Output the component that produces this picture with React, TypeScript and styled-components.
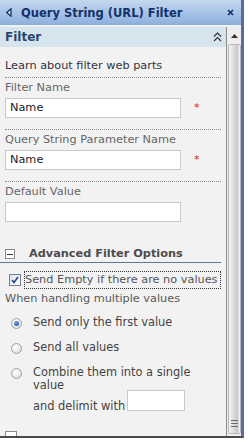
import styled, { createGlobalStyle } from "styled-components";

const GlobalStyle = createGlobalStyle`
  html, body {
    margin: 0;
    padding: 0;
    background: #ffffff;
  }
  body {
    font-family: "DejaVu Sans", Verdana, sans-serif;
  }
`;

const Frame = styled.div`
  width: 241px;
  height: 436px;
  border-right: 3px solid #5b6c9c;
  border-bottom: 2px solid #4a4a4a;
  display: flex;
  flex-direction: column;
  overflow: hidden;
  background: #eef2f7;
`;

const TitleBar = styled.div`
  flex: none;
  height: 25px;
  display: flex;
  align-items: center;
  padding: 0 7px 0 6px;
  background: linear-gradient(#c4d7f0, #8cafdc);
  color: #15316a;
  font-size: 11.5px;
  font-weight: bold;
`;

const Title = styled.span`
  flex: 1;
  margin-left: 9px;
`;

const Body = styled.div`
  flex: 1;
  min-height: 0;
  display: flex;
  padding-top: 2px;
`;

const Pane = styled.div`
  width: 226px;
  border-right: 1px solid #8c8c8c;
  background: #f2f2f2;
  display: flex;
  flex-direction: column;
  overflow: hidden;
`;

const PaneHeader = styled.div`
  flex: none;
  height: 20px;
  display: flex;
  align-items: center;
  justify-content: space-between;
  padding: 0 4px 0 5px;
  background: #d6e4ee;
  color: #27476a;
  font-size: 12px;
  font-weight: bold;
`;

const Content = styled.div`
  padding: 12px 0 0 5px;
  width: 216px;
  font-size: 11.3px;
  line-height: 14px;
`;

const Text = styled.div<{ $tone?: "dark" | "label" }>`
  color: ${(p) => (p.$tone === "dark" ? "#333340" : "#666666")};
`;

const Divider = styled.div<{ $gap: number }>`
  margin-top: ${(p) => p.$gap}px;
  border-top: 1px dotted #8a8a8a;
`;

const Label = styled(Text)`
  margin-top: 3px;
`;

const Caption = styled(Text)`
  margin-top: 3px;
  color: #5a5a5a;
`;

const InputRow = styled.div`
  margin-top: 3px;
  display: flex;
  align-items: center;
`;

const TextBox = styled.div<{ $width: number; $height?: number }>`
  box-sizing: border-box;
  width: ${(p) => p.$width}px;
  height: ${(p) => p.$height ?? 20}px;
  padding: 0 4px;
  background: #ffffff;
  border: 1px solid #c9c9c9;
  color: #1c1c1c;
  line-height: 18px;
`;

const Required = styled.span`
  margin-left: 13px;
  color: #c8303a;
  font-size: 11px;
`;

const AdvancedHeader = styled.div`
  margin: 24px 0 0 -5px;
  padding-left: 5px;
  height: 16px;
  display: flex;
  align-items: center;
  gap: 14px;
  border-bottom: 1px solid #5f7897;
  color: #4c4c4c;
  font-weight: bold;
`;

const ToggleBox = styled.span`
  box-sizing: border-box;
  width: 10px;
  height: 10px;
  border: 1px solid #8a8a8a;
  background: #ffffff;
  display: flex;
  align-items: center;
  justify-content: center;
  &::after {
    content: "";
    width: 6px;
    height: 1px;
    background: #333;
  }
`;

const CheckRow = styled.div`
  margin-top: 8px;
  display: flex;
  align-items: center;
  gap: 3px;
  padding-left: 4px;
`;

const CheckBox = styled.span`
  box-sizing: border-box;
  width: 12px;
  height: 12px;
  border: 1px solid #6f7f99;
  background: linear-gradient(135deg, #dfe3ea, #ffffff);
  display: flex;
  align-items: center;
  justify-content: center;
`;

const FocusLabel = styled.span`
  padding: 1px 2px 1px 0;
  border: 1px dotted #333;
  color: #555555;
  white-space: nowrap;
`;

const RadioList = styled.div`
  margin-top: 10px;
  display: flex;
  flex-direction: column;
  gap: 12px;
  padding-left: 6px;
`;

const RadioRow = styled.div`
  display: flex;
  align-items: flex-start;
  gap: 11px;
`;

const Radio = styled.span<{ $checked?: boolean }>`
  flex: none;
  box-sizing: border-box;
  width: 11px;
  height: 11px;
  margin-top: 2px;
  border-radius: 50%;
  border: 1px solid #9aa3ad;
  background: radial-gradient(circle at 40% 35%, #ffffff, #d4d7db);
  display: flex;
  align-items: center;
  justify-content: center;
  &::after {
    content: "";
    display: ${(p) => (p.$checked ? "block" : "none")};
    width: 5px;
    height: 5px;
    border-radius: 50%;
    background: radial-gradient(circle at 35% 35%, #6fa2e0, #1b4f9c);
  }
`;

const RadioText = styled.div`
  max-width: 166px;
  color: #444444;
  font-size: 11.4px;
  line-height: 13px;
`;

const DelimitRow = styled.div`
  margin: -2px 0 0 28px;
  display: flex;
  align-items: flex-end;
  gap: 2px;
  color: #444444;
  font-size: 11.4px;
  span {
    margin-bottom: -2px;
  }
`;

const NextToggle = styled.div`
  margin-top: 20px;
  width: 10px;
  height: 10px;
  border: 1px solid #8a8a8a;
  background: #fff;
`;

const ScrollBar = styled.div`
  width: 14px;
  display: flex;
  flex-direction: column;
  align-items: center;
  background: #eeeeee;
`;

const ScrollArrow = styled.div`
  height: 17px;
  display: flex;
  align-items: center;
  justify-content: center;
`;

const Thumb = styled.div`
  flex: 1;
  width: 13px;
  margin-bottom: 2px;
  box-sizing: border-box;
  border: 1px solid #b8b8b8;
  border-radius: 2px;
  background: linear-gradient(to right, #f4f4f4, #e2e2e2 35%, #c9c9c9 75%, #f8f8f8);
  display: flex;
  align-items: flex-end;
  justify-content: center;
  padding-bottom: 6px;
`;

const CollapseIcon = () => (
  <svg width="9" height="10" viewBox="0 0 9 10">
    <path d="M1 4.5 L4.5 1 L8 4.5 M1 9 L4.5 5.5 L8 9" fill="none" stroke="#333" strokeWidth="1.2" />
  </svg>
);

const App = () => {
  return (
    <>
      <GlobalStyle />
      <Frame>
        <TitleBar>
          <svg width="6" height="9" viewBox="0 0 6 9">
            <path d="M5 0.8 L0.8 4.5 L5 8.2 Z" fill="#dfe8f6" stroke="#15316a" strokeWidth="1.3" />
          </svg>
          <Title>Query String (URL) Filter</Title>
          <svg width="7" height="7" viewBox="0 0 7 7">
            <path d="M1 1 L6 6 M6 1 L1 6" stroke="#15316a" strokeWidth="1.7" />
          </svg>
        </TitleBar>
        <Body>
          <Pane>
            <PaneHeader>
              Filter
              <CollapseIcon />
            </PaneHeader>
            <Content>
              <Text $tone="dark">Learn about filter web parts</Text>
              <Divider $gap={4} />
              <Label>Filter Name</Label>
              <InputRow>
                <TextBox $width={176}>Name</TextBox>
                <Required>*</Required>
              </InputRow>
              <Divider $gap={11} />
              <Label>Query String Parameter Name</Label>
              <InputRow>
                <TextBox $width={176}>Name</TextBox>
                <Required>*</Required>
              </InputRow>
              <Divider $gap={11} />
              <Label>Default Value</Label>
              <InputRow>
                <TextBox $width={176} />
              </InputRow>
              <AdvancedHeader>
                <ToggleBox />
                Advanced Filter Options
              </AdvancedHeader>
              <CheckRow>
                <CheckBox>
                  <svg width="8" height="8" viewBox="0 0 8 8">
                    <path d="M1 4 L3 6.5 L7 1" fill="none" stroke="#2a3f8f" strokeWidth="1.6" />
                  </svg>
                </CheckBox>
                <FocusLabel>Send Empty if there are no values</FocusLabel>
              </CheckRow>
              <Caption>When handling multiple values</Caption>
              <RadioList>
                <RadioRow>
                  <Radio $checked />
                  <RadioText>Send only the first value</RadioText>
                </RadioRow>
                <RadioRow>
                  <Radio />
                  <RadioText>Send all values</RadioText>
                </RadioRow>
                <RadioRow>
                  <Radio />
                  <RadioText>Combine them into a single value</RadioText>
                </RadioRow>
              </RadioList>
              <DelimitRow>
                <span>and delimit with</span>
                <TextBox $width={58} $height={21} />
              </DelimitRow>
              <NextToggle />
            </Content>
          </Pane>
          <ScrollBar>
            <ScrollArrow>
              <svg width="7" height="4" viewBox="0 0 7 4">
                <path d="M0 4 L3.5 0 L7 4 Z" fill="#333" />
              </svg>
            </ScrollArrow>
            <Thumb>
              <svg width="7" height="7" viewBox="0 0 7 7">
                <path d="M0 0.5 H7 M0 3.5 H7 M0 6.5 H7" stroke="#6a6a6a" strokeWidth="1" />
              </svg>
            </Thumb>
          </ScrollBar>
        </Body>
      </Frame>
    </>
  );
};

export default App;
